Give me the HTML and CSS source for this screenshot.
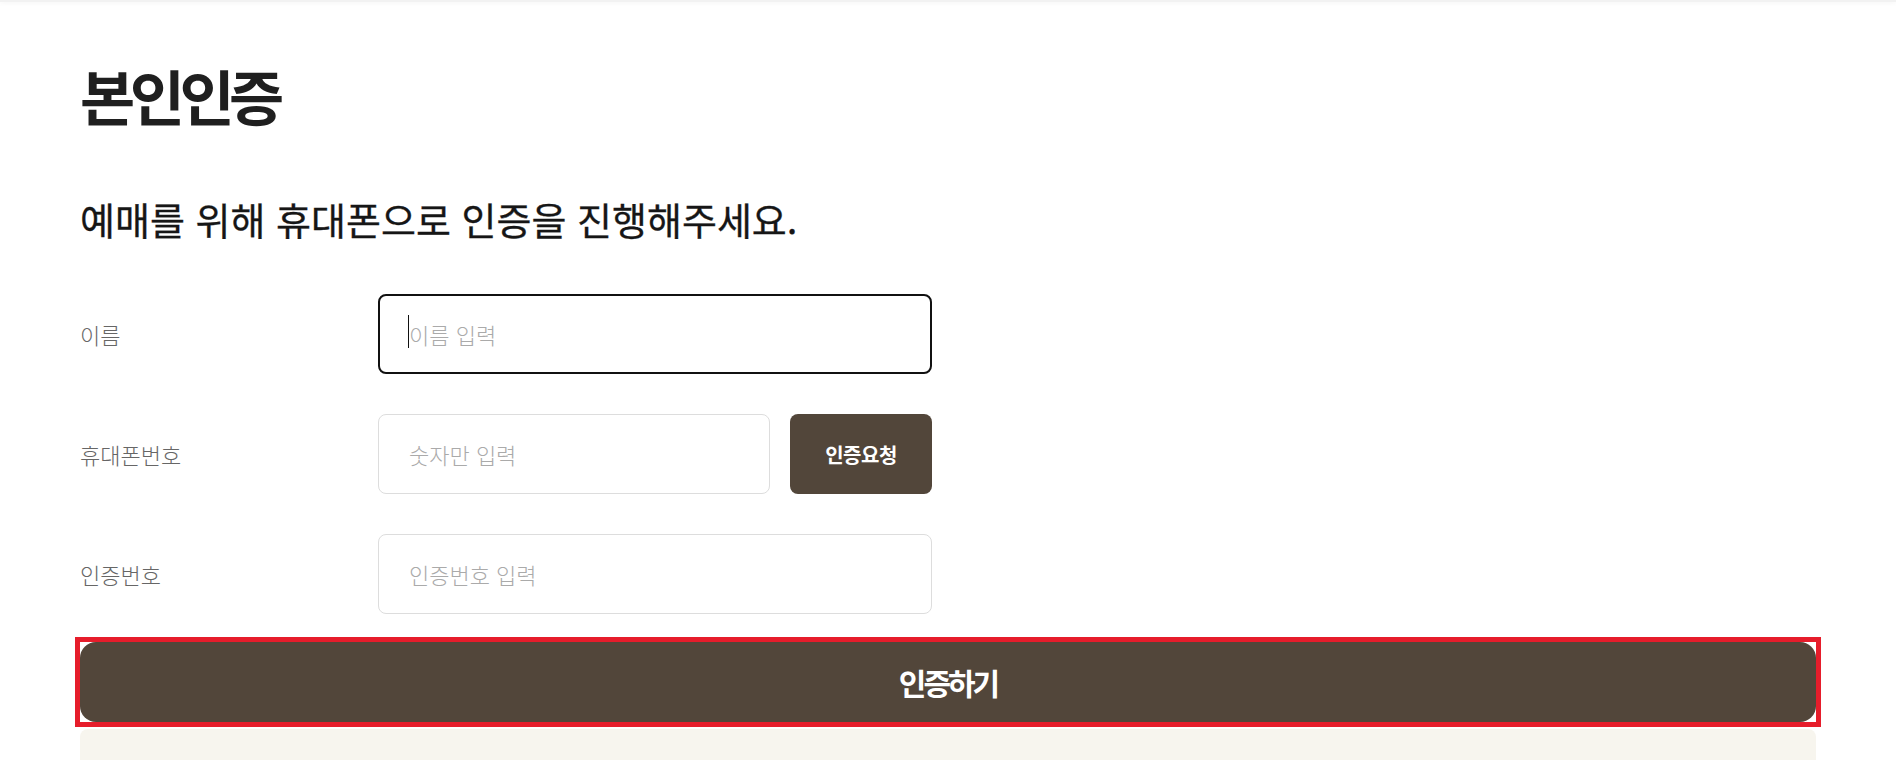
FILE: index.html
```html
<!DOCTYPE html>
<html lang="ko">
<head>
    <meta charset="UTF-8">
    <meta name="viewport" content="width=device-width, initial-scale=1.0">
    <title>본인인증</title>
    <link rel="stylesheet" href="styles.css">
</head>
<body>
    <div class="topbar"></div>

    <main class="page">
        <h1 class="title">본인인증</h1>
        <p class="subtitle">예매를 위해 휴대폰으로 인증을 진행해주세요.</p>

        <form class="verify-form" onsubmit="return false">
            <div class="row">
                <label class="label" for="user-name">이름</label>
                <div class="field">
                    <input id="user-name" class="input is-active" type="text" placeholder="이름 입력">
                    <span class="caret"></span>
                </div>
            </div>

            <div class="row">
                <label class="label" for="user-phone">휴대폰번호</label>
                <div class="field">
                    <input id="user-phone" class="input" type="text" placeholder="숫자만 입력">
                    <button type="button" class="request-btn">인증요청</button>
                </div>
            </div>

            <div class="row">
                <label class="label" for="user-code">인증번호</label>
                <div class="field">
                    <input id="user-code" class="input" type="text" placeholder="인증번호 입력">
                </div>
            </div>

            <div class="submit-wrap">
                <button type="submit" class="submit-btn">인증하기</button>
            </div>
        </form>

        <div class="notice"></div>
    </main>
</body>
</html>
```

FILE: styles.css
```css
* {
    margin: 0;
    padding: 0;
    box-sizing: border-box;
    font-family: "Noto Sans CJK KR", "Noto Sans", sans-serif;
}

body {
    background: #fff;
    color: #222;
    overflow: hidden;
}

.topbar {
    height: 2px;
    background: #f2f2f2;
    box-shadow: 0 1px 4px rgba(0, 0, 0, 0.06);
}

.page {
    padding: 57px 80px 0;
}

.title {
    font-size: 60px;
    font-weight: 700;
    line-height: 72px;
    letter-spacing: -5.5px;
    color: #1f1f1f;
}

.subtitle {
    margin-top: 64px;
    font-size: 38px;
    font-weight: 400;
    line-height: 48px;
    color: #161616;
    -webkit-text-stroke: 0.3px #161616;
}

.verify-form {
    margin-top: 51px;
    display: flex;
    flex-direction: column;
    gap: 40px;
}

.row {
    display: grid;
    grid-template-columns: 298px 554px;
    align-items: center;
}

.label {
    font-size: 22px;
    font-weight: 300;
    color: #666;
}

.field {
    position: relative;
    display: flex;
    gap: 20px;
    height: 80px;
}

.input {
    flex: 1;
    min-width: 0;
    height: 100%;
    padding: 0 30px;
    border: 1px solid #ddd;
    border-radius: 8px;
    font-size: 22px;
    font-weight: 300;
    color: #222;
    outline: none;
}

.input::placeholder {
    color: #aaa;
}

.input.is-active {
    border: 2px solid #111;
    padding: 0 29px;
}

.caret {
    position: absolute;
    left: 30px;
    top: 21px;
    width: 1px;
    height: 33px;
    background: #111;
}

.request-btn {
    width: 142px;
    border: none;
    border-radius: 8px;
    background: #52463a;
    color: #fff;
    font-size: 20px;
    font-weight: 700;
    letter-spacing: -0.5px;
    cursor: pointer;
}

.submit-wrap {
    margin: -17px -5px 0;
    border: 5px solid #e61d2b;
}

.submit-btn {
    display: block;
    width: 100%;
    height: 80px;
    border: none;
    border-radius: 16px;
    background: #52463a;
    color: #fff;
    font-size: 30px;
    font-weight: 700;
    letter-spacing: -3px;
    cursor: pointer;
}

.notice {
    margin-top: 2px;
    height: 200px;
    border-radius: 8px 8px 0 0;
    background: #f7f5ee;
}
```
